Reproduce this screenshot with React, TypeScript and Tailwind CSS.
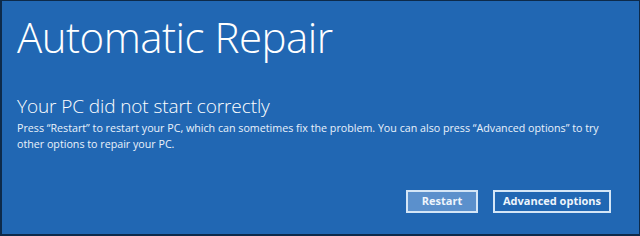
export default function App() {
  return (
    <div className="h-[236px] w-[640px] overflow-hidden bg-[#0d2a4a] pl-[2px] pt-px pr-px pb-[2px]">
      <div
        className="flex h-full w-full flex-col bg-[#2167b3] text-white"
        style={{ fontFamily: '"Open Sans", "Noto Sans", sans-serif' }}
      >
        <h1 className="ml-[15px] mt-[10px] text-[42px] font-light leading-[52px] tracking-[-0.5px]">
          Automatic Repair
        </h1>
        <h2 className="ml-[15px] mt-[31px] text-[19px] font-light leading-[24px] tracking-[-0.1px]">
          Your PC did not start correctly
        </h2>
        <p className="ml-[15px] mt-[2px] w-[605px] text-[10.7px] leading-[16px] text-[#eaf2fb]">
          Press “Restart” to restart your PC, which can sometimes fix the problem. You can also press “Advanced options” to try other
          options to repair your PC.
        </p>
        <div className="mr-[28px] mt-auto mb-[21px] flex justify-end gap-[15px]">
          <button className="h-[23px] w-[72px] border-2 border-[#d4e6f7] bg-[#5b90cc] text-[11px] font-bold text-[#eef5fc]">
            Restart
          </button>
          <button className="h-[23px] w-[118px] border-2 border-[#d4e6f7] bg-[#2167b3] text-[11px] font-bold text-[#eef5fc]">
            Advanced options
          </button>
        </div>
      </div>
    </div>
  );
}
